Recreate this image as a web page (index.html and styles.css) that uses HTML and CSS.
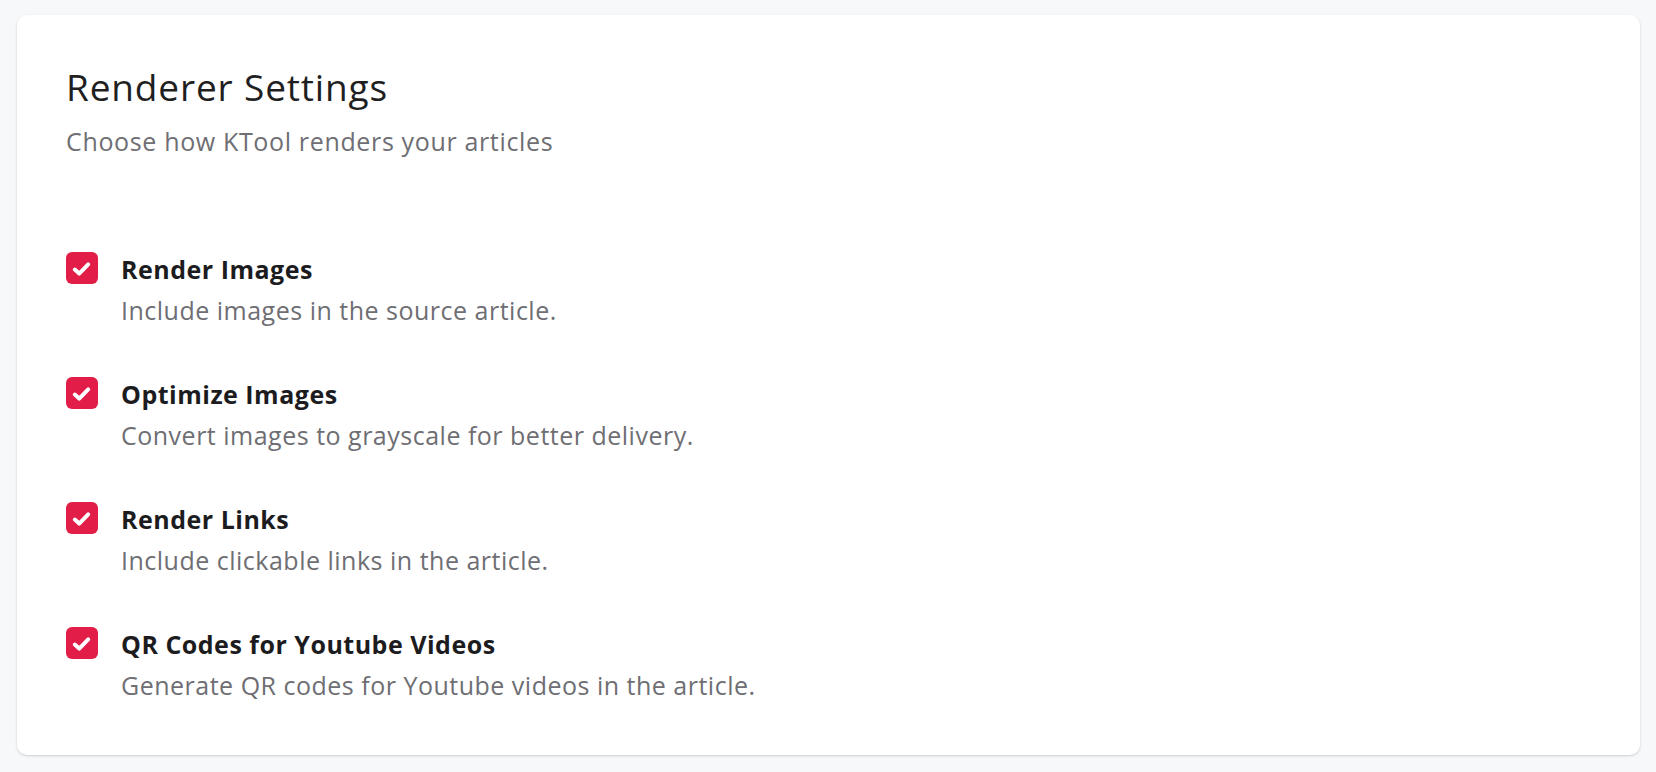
FILE: index.html
```html
<!DOCTYPE html>
<html lang="en">
<head>
      <meta charset="UTF-8">
      <meta name="viewport" content="width=device-width, initial-scale=1.0">
      <title>Renderer Settings</title>
      <link rel="stylesheet" href="styles.css">
</head>
<body>
      <section class="card">
            <header class="card-head">
                  <h2 class="card-title">Renderer Settings</h2>
                  <p class="card-sub">Choose how KTool renders your articles</p>
            </header>
            <div class="options">
                  <label class="option">
                        <span class="check"><svg viewBox="0 0 32 32"><path d="M8.8 17.6l4.4 4 9-9.2"/></svg></span>
                        <span class="option-text">
                              <strong class="option-title">Render Images</strong>
                              <span class="option-desc">Include images in the source article.</span>
                        </span>
                  </label>
                  <label class="option">
                        <span class="check"><svg viewBox="0 0 32 32"><path d="M8.8 17.6l4.4 4 9-9.2"/></svg></span>
                        <span class="option-text">
                              <strong class="option-title">Optimize Images</strong>
                              <span class="option-desc">Convert images to grayscale for better delivery.</span>
                        </span>
                  </label>
                  <label class="option">
                        <span class="check"><svg viewBox="0 0 32 32"><path d="M8.8 17.6l4.4 4 9-9.2"/></svg></span>
                        <span class="option-text">
                              <strong class="option-title">Render Links</strong>
                              <span class="option-desc">Include clickable links in the article.</span>
                        </span>
                  </label>
                  <label class="option">
                        <span class="check"><svg viewBox="0 0 32 32"><path d="M8.8 17.6l4.4 4 9-9.2"/></svg></span>
                        <span class="option-text">
                              <strong class="option-title">QR Codes for Youtube Videos</strong>
                              <span class="option-desc">Generate QR codes for Youtube videos in the article.</span>
                        </span>
                  </label>
            </div>
      </section>
</body>
</html>
```

FILE: styles.css
```css
html{
      box-sizing: border-box;
}
*, *:after, *:before{
      box-sizing: inherit;
}
body{
      margin: 0;
      padding: 15px 16px 16px 17px;
      background: #f7f8fa;
      font-family: "Open Sans", "Noto Sans", sans-serif;
      color: #1c1c1f;
}
.card{
      background: #fff;
      border-radius: 10px;
      box-shadow: 0 1px 3px rgba(0,0,0,.12), 0 1px 2px rgba(0,0,0,.06);
      padding: 52px 48px 52px 49px;
}
.card-title{
      margin: 0;
      font-size: 37px;
      line-height: 40px;
      font-weight: 400;
      letter-spacing: .023em;
      color: #1f1f22;
}
.card-sub{
      margin: 18px 0 0;
      font-size: 25px;
      line-height: 32px;
      letter-spacing: .026em;
      color: #6e6e73;
}
.options{
      display: flex;
      flex-direction: column;
      gap: 49px;
      margin-top: 95px;
}
.option{
      display: flex;
      gap: 23px;
      align-items: flex-start;
}
.check{
      flex: none;
      width: 32px;
      height: 32px;
      border-radius: 6px;
      background: #e11d48;
}
.check svg{
      display: block;
      width: 32px;
      height: 32px;
      fill: none;
      stroke: #fff;
      stroke-width: 4;
      stroke-linecap: round;
      stroke-linejoin: round;
}
.option-text{
      display: flex;
      flex-direction: column;
}
.option-title{
      margin-top: 1px;
      font-size: 25px;
      line-height: 32px;
      font-weight: 700;
      letter-spacing: .02em;
      color: #1c1c1f;
}
.option-desc{
      margin-top: 7px;
      font-size: 25px;
      line-height: 36px;
      letter-spacing: .02em;
      color: #6e6e73;
}
```
